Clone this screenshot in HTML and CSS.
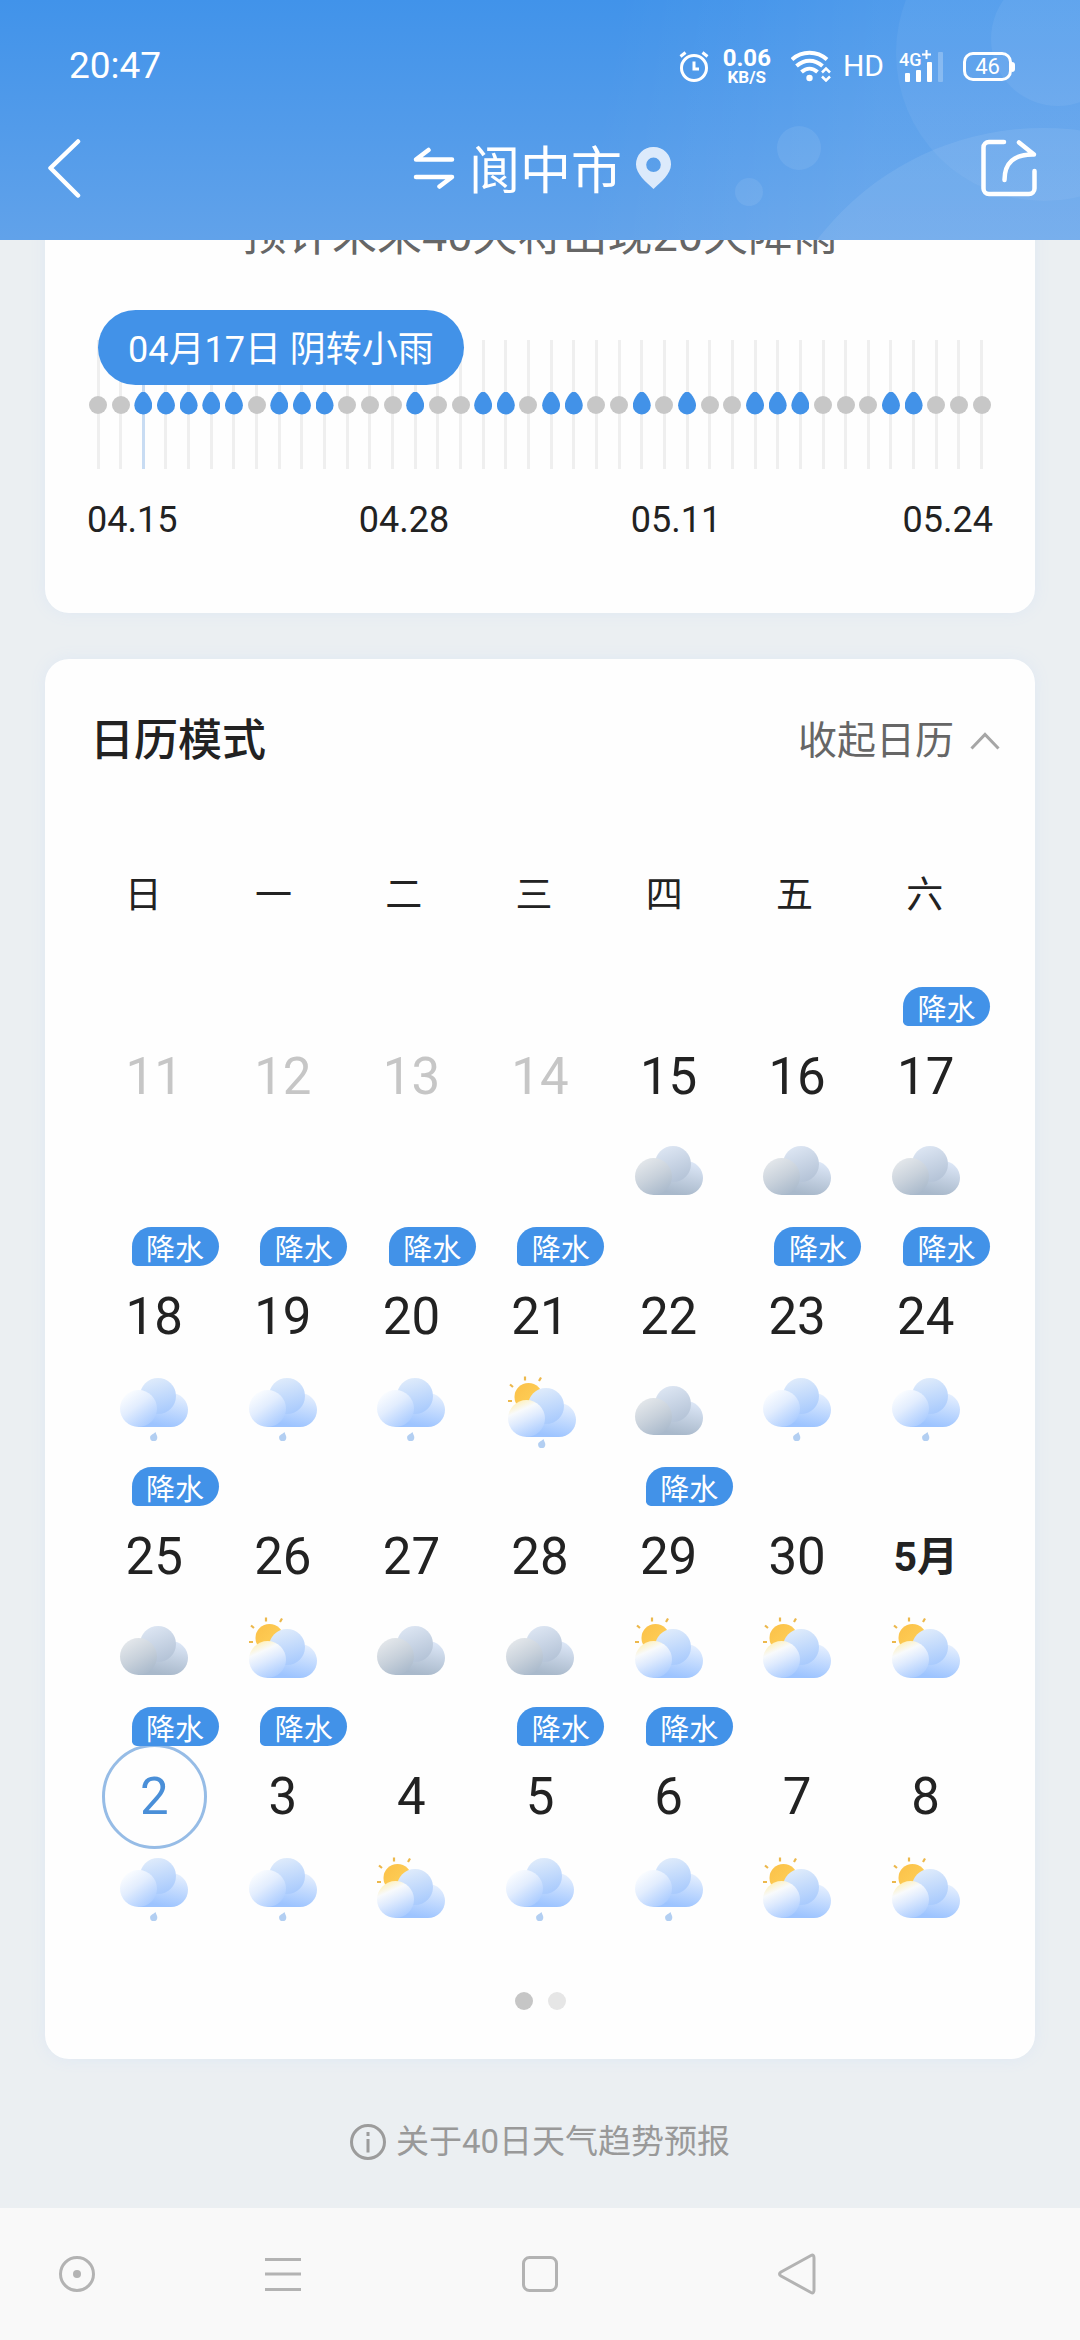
FILE: index.html
```html
<!DOCTYPE html>
<html lang="zh-CN">
<head>
<meta charset="utf-8">
<meta name="viewport" content="width=device-width, initial-scale=1">
<title>阆中市 40日天气</title>
<link rel="stylesheet" href="styles.css">
</head>
<body>
<svg class="sprite" width="0" height="0" aria-hidden="true">
  <defs>
    <linearGradient id="gray-left" x1="0.2" y1="0.1" x2="0.7" y2="1"><stop offset="0" stop-color="#e2e6ea"/><stop offset="0.5" stop-color="#c8d1db"/><stop offset="1" stop-color="#a9b9cb"/></linearGradient>
    <linearGradient id="gray-mid" x1="0.3" y1="0" x2="0.7" y2="1"><stop offset="0" stop-color="#dde6f3"/><stop offset="1" stop-color="#b3c2d6"/></linearGradient>
    <linearGradient id="gray-right" x1="0.9" y1="0" x2="0.6" y2="1"><stop offset="0" stop-color="#e0eafa"/><stop offset="1" stop-color="#a9b9cb"/></linearGradient>
    <linearGradient id="blue-left" x1="0.15" y1="0.1" x2="0.8" y2="1"><stop offset="0" stop-color="#fbfdff"/><stop offset="0.4" stop-color="#e2edfe"/><stop offset="1" stop-color="#a4c8ff"/></linearGradient>
    <linearGradient id="blue-mid" x1="0.3" y1="0" x2="0.6" y2="1"><stop offset="0" stop-color="#e0ecfb"/><stop offset="1" stop-color="#a8cafd"/></linearGradient>
    <linearGradient id="blue-right" x1="0.9" y1="0" x2="0.6" y2="1"><stop offset="0" stop-color="#eaf2fe"/><stop offset="1" stop-color="#9dc4ff"/></linearGradient>
    <linearGradient id="sunlit-left" x1="0.3" y1="0" x2="0.75" y2="1"><stop offset="0" stop-color="#fff0b8"/><stop offset="0.25" stop-color="#f8fafc"/><stop offset="0.5" stop-color="#dfebfe"/><stop offset="1" stop-color="#a4c8ff"/></linearGradient>
    <linearGradient id="sun-fill" x1="0" y1="0" x2="1" y2="1"><stop offset="0" stop-color="#fbc048"/><stop offset="1" stop-color="#ffd45c"/></linearGradient>
    <g id="cloud-gray">
      <path fill="url(#gray-right)" d="M51 15a17 17 0 0 1 0 34H18V36L36 22Z"/>
      <circle fill="url(#gray-mid)" cx="38" cy="18" r="18"/>
      <circle fill="url(#gray-left)" cx="18.500" cy="30.500" r="18.500"/>
    </g>
    <g id="cloud-blue">
      <path fill="url(#blue-right)" d="M51 15a17 17 0 0 1 0 34H18V36L36 22Z"/>
      <circle fill="url(#blue-mid)" cx="38" cy="18" r="18"/>
      <circle fill="url(#blue-left)" cx="18.500" cy="30.500" r="18.500"/>
    </g>
    <g id="cloud-sunlit">
      <circle fill="url(#sun-fill)" cx="20.500" cy="9" r="14"/>
      <path d="M17-11.500v4M33-10.500l-2 3.500M2-3.500l3 2.500M0 13h4" stroke="#ecb84c" stroke-width="2.200" fill="none"/>
      <path fill="url(#blue-right)" d="M51 15a17 17 0 0 1 0 34H18V36L36 22Z"/>
      <circle fill="url(#blue-mid)" cx="38" cy="18" r="18"/>
      <circle fill="url(#sunlit-left)" cx="18.500" cy="30.500" r="18.500"/>
    </g>
    <path id="raindrop" fill="#b3cff2" d="M5.500 0c1 3 1.800 3.800 1.800 5.400a3.600 3.600 0 0 1-7.200 0C.1 3 3.500 2.200 5.500 0Z"/>
    <symbol id="overcast" viewBox="0 0 72 76"><use href="#cloud-gray" x="2" y="12"/></symbol>
    <symbol id="rain" viewBox="0 0 72 76"><use href="#cloud-blue" x="2" y="4"/><use href="#raindrop" x="32" y="58"/></symbol>
    <symbol id="partly" viewBox="0 0 72 76"><use href="#cloud-sunlit" x="2" y="15"/></symbol>
    <symbol id="sun-rain" viewBox="0 0 72 76"><use href="#cloud-sunlit" x="4" y="14"/><use href="#raindrop" x="34" y="65"/></symbol>
  </defs>
</svg>

<header class="topbar">
  <svg class="bubbles" viewBox="780 0 300 240" preserveAspectRatio="xMaxYMin meet" aria-hidden="true">
    <g fill="#fff">
      <circle cx="1044" cy="53" r="148" fill-opacity="0.050"/>
      <circle cx="1058" cy="39" r="67" fill-opacity="0.060"/>
      <circle cx="1043" cy="412" r="284" fill-opacity="0.080"/>
      <circle cx="799" cy="148" r="22" fill-opacity="0.080"/>
      <circle cx="749" cy="192" r="14" fill-opacity="0.080"/>
    </g>
  </svg>
  <div class="status">
    <span class="clock">20:47</span>
    <div class="indicators">
      <svg class="alarm" width="30" height="32" viewBox="0 0 30 32" fill="none" stroke="#fff" stroke-width="3" aria-label="闹钟"><circle cx="15" cy="18" r="12.500"/><path d="M15 11.500V19h5M1.500 6.500l5-4M28.500 6.500l-5-4"/></svg>
      <span class="speed"><b class="rate">0.06</b><b class="unit">KB/S</b></span>
      <svg class="wifi" width="40" height="32" viewBox="0 0 40 32" fill="none" stroke="#fff" stroke-width="4" aria-label="无线网络"><path d="M1 9.500C11 .5 26 .5 36 9.500M5.500 16c8-7 18-7 26 0M10.500 22c5-4.500 11-4.500 16 0"/><circle cx="18.500" cy="28" r="3.200" fill="#fff" stroke="none"/><path d="M31 22.500l4-4 4 4M31 26.500l4 4 4-4" stroke-width="2.500"/></svg>
      <span class="hd">HD</span>
      <svg class="signal" width="45" height="34" viewBox="0 0 45 34" fill="#fff" aria-label="4G+ 信号"><text class="net" x="0" y="17">4G</text><path d="M23 4.500h9v2h-9zM26.500 1h2v9h-2z"/><rect x="6" y="24" width="5" height="9" rx="1"/><rect x="17" y="21" width="5" height="12" rx="1"/><rect x="28" y="13" width="5" height="20" rx="1"/><rect x="39" y="3" width="5" height="30" rx="1" fill-opacity="0.250"/></svg>
      <span class="battery">46</span>
    </div>
  </div>
  <div class="titlebar">
    <button class="icon-btn back" aria-label="返回"><svg width="34" height="60" viewBox="0 0 34 60" fill="none" stroke="#fff" stroke-width="4.500" stroke-linecap="round" stroke-linejoin="round"><path d="M31 3.500L3.500 30 31 57.500"/></svg></button>
    <button class="city">
      <svg width="42" height="42" viewBox="0 0 42 42" fill="none" stroke="#fff" stroke-width="4.500" stroke-linecap="round" stroke-linejoin="round"><path d="M39 12.500H3L15.500 3M3 30h36L26.500 39.500"/></svg>
      <h1>阆中市</h1>
      <svg width="35" height="42" viewBox="0 0 35 42"><path fill="#dceafb" fill-rule="evenodd" d="M17.500 0A17.300 17.300 0 0 1 35 17.500C35 27 25 35 17.500 42 10 35 0 27 0 17.500A17.300 17.300 0 0 1 17.500 0Zm0 10.500a7.300 7.300 0 1 0 0 14.600 7.300 7.300 0 0 0 0-14.600Z"/></svg>
    </button>
    <button class="icon-btn share" aria-label="分享"><svg width="56" height="58" viewBox="0 0 56 58" fill="none" stroke="#fff" stroke-width="4.500" stroke-linecap="round" stroke-linejoin="round"><path d="M23 3H8a5.500 5.500 0 0 0-5.500 5.500v41A5.500 5.500 0 0 0 8 55h40a5.500 5.500 0 0 0 5.500-5.500V32M23.500 41C23.500 24 33 15 53 15.500L38 3.500"/></svg></button>
  </div>
</header>

<main class="content">
  <section class="card trend">
    <h2 class="summary">预计未来40天将出现20天降雨</h2>
    <div class="chart">
      <i class="dry"></i><i class="dry"></i><i class="wet active"></i><i class="wet"></i><i class="wet"></i><i class="wet"></i><i class="wet"></i><i class="dry"></i><i class="wet"></i><i class="wet"></i>
      <i class="wet"></i><i class="dry"></i><i class="dry"></i><i class="dry"></i><i class="wet"></i><i class="dry"></i><i class="dry"></i><i class="wet"></i><i class="wet"></i><i class="dry"></i>
      <i class="wet"></i><i class="wet"></i><i class="dry"></i><i class="dry"></i><i class="wet"></i><i class="dry"></i><i class="wet"></i><i class="dry"></i><i class="dry"></i><i class="wet"></i>
      <i class="wet"></i><i class="wet"></i><i class="dry"></i><i class="dry"></i><i class="dry"></i><i class="wet"></i><i class="wet"></i><i class="dry"></i><i class="dry"></i><i class="dry"></i>
      <span class="tooltip">04月17日 阴转小雨</span>
    </div>
    <div class="axis"><span>04.15</span><span>04.28</span><span>05.11</span><span>05.24</span></div>
  </section>

  <section class="card calendar-card">
    <div class="card-head">
      <h2>日历模式</h2>
      <button class="collapse">收起日历<svg width="30" height="18" viewBox="0 0 30 18" fill="none" stroke="#a6a6a6" stroke-width="3"><path d="M1.500 16.500L15 2.500l13.500 14"/></svg></button>
    </div>
    <table class="calendar">
      <thead>
        <tr><th>日</th><th>一</th><th>二</th><th>三</th><th>四</th><th>五</th><th>六</th></tr>
      </thead>
      <tbody>
        <tr>
          <td><button class="day past">11</button></td>
          <td><button class="day past">12</button></td>
          <td><button class="day past">13</button></td>
          <td><button class="day past">14</button></td>
          <td><button class="day">15</button><svg class="wx"><use href="#overcast"/></svg></td>
          <td><button class="day">16</button><svg class="wx"><use href="#overcast"/></svg></td>
          <td><span class="tag">降水</span><button class="day">17</button><svg class="wx"><use href="#overcast"/></svg></td>
        </tr>
        <tr>
          <td><span class="tag">降水</span><button class="day">18</button><svg class="wx"><use href="#rain"/></svg></td>
          <td><span class="tag">降水</span><button class="day">19</button><svg class="wx"><use href="#rain"/></svg></td>
          <td><span class="tag">降水</span><button class="day">20</button><svg class="wx"><use href="#rain"/></svg></td>
          <td><span class="tag">降水</span><button class="day">21</button><svg class="wx"><use href="#sun-rain"/></svg></td>
          <td><button class="day">22</button><svg class="wx"><use href="#overcast"/></svg></td>
          <td><span class="tag">降水</span><button class="day">23</button><svg class="wx"><use href="#rain"/></svg></td>
          <td><span class="tag">降水</span><button class="day">24</button><svg class="wx"><use href="#rain"/></svg></td>
        </tr>
        <tr>
          <td><span class="tag">降水</span><button class="day">25</button><svg class="wx"><use href="#overcast"/></svg></td>
          <td><button class="day">26</button><svg class="wx"><use href="#partly"/></svg></td>
          <td><button class="day">27</button><svg class="wx"><use href="#overcast"/></svg></td>
          <td><button class="day">28</button><svg class="wx"><use href="#overcast"/></svg></td>
          <td><span class="tag">降水</span><button class="day">29</button><svg class="wx"><use href="#partly"/></svg></td>
          <td><button class="day">30</button><svg class="wx"><use href="#partly"/></svg></td>
          <td><button class="day month">5月</button><svg class="wx"><use href="#partly"/></svg></td>
        </tr>
        <tr>
          <td><span class="tag">降水</span><button class="day selected">2</button><svg class="wx"><use href="#rain"/></svg></td>
          <td><span class="tag">降水</span><button class="day">3</button><svg class="wx"><use href="#rain"/></svg></td>
          <td><button class="day">4</button><svg class="wx"><use href="#partly"/></svg></td>
          <td><span class="tag">降水</span><button class="day">5</button><svg class="wx"><use href="#rain"/></svg></td>
          <td><span class="tag">降水</span><button class="day">6</button><svg class="wx"><use href="#rain"/></svg></td>
          <td><button class="day">7</button><svg class="wx"><use href="#partly"/></svg></td>
          <td><button class="day">8</button><svg class="wx"><use href="#partly"/></svg></td>
        </tr>
      </tbody>
    </table>
    <div class="pager"><span class="dot current"></span><span class="dot"></span></div>
  </section>

  <a class="about" href="#about">
    <svg width="36" height="36" viewBox="0 0 36 36" fill="none" stroke="#9c9c9c" stroke-width="3"><circle cx="18" cy="18" r="16.500"/><path d="M18 8v4M18 15v13.500"/></svg>
    关于40日天气趋势预报
  </a>
</main>

<nav class="sysnav">
  <button aria-label="助手"><svg width="40" height="42" viewBox="0 0 40 42"><circle cx="20" cy="21" r="16.500"/><circle class="solid" cx="20" cy="21" r="4"/></svg></button>
  <button aria-label="菜单"><svg width="40" height="42" viewBox="0 0 40 42"><path d="M2 6.500h36M2 21h36M2 36.500h36"/></svg></button>
  <button aria-label="主页"><svg width="40" height="42" viewBox="0 0 40 42"><rect x="3.500" y="4.500" width="33" height="33" rx="6"/></svg></button>
  <button aria-label="返回"><svg width="40" height="42" viewBox="0 0 40 42"><path stroke-linejoin="round" d="M34 2.500Q37 1 37 5v32q0 4-3 2.500L4 23q-3-2 0-4Z"/></svg></button>
</nav>
</body>
</html>
```

FILE: styles.css
```css
* {
  box-sizing: border-box;
}

body {
  margin: 0;
  min-height: 100vh;
  display: flex;
  flex-direction: column;
  background: #ebeff2;
  color: #222;
  font-family: Roboto, "Noto Sans CJK SC", sans-serif;
}

h1,
h2 {
  margin: 0;
  font-weight: 400;
}

button {
  padding: 0;
  border: 0;
  background: none;
  color: inherit;
  font: inherit;
}

svg {
  display: block;
}

.sprite {
  position: absolute;
}

/* Header */

.topbar {
  position: sticky;
  top: 0;
  z-index: 2;
  height: 240px;
  padding-top: 36px;
  overflow: hidden;
  color: #fff;
  background:
    linear-gradient(100deg, rgba(255, 255, 255, 0) 55%, rgba(255, 255, 255, 0.08) 80%),
    linear-gradient(#4193ea, #61a2ea);
}

.bubbles {
  position: absolute;
  top: 0;
  right: 0;
  width: 300px;
  height: 240px;
  overflow: visible;
}

.status {
  position: relative;
  height: 60px;
  padding: 0 68px 0 69px;
  display: flex;
  align-items: center;
  justify-content: space-between;
}

.clock {
  font-size: 37px;
  line-height: 60px;
}

.indicators {
  display: flex;
  align-items: center;
}

.speed {
  margin: 0 20px 0 14px;
  display: flex;
  flex-direction: column;
  align-items: center;
}

.rate {
  font-size: 24px;
  line-height: 22px;
}

.unit {
  font-size: 17px;
  line-height: 17px;
}

.hd {
  margin: 0 15px 0 12px;
  font-size: 30px;
  line-height: 60px;
}

.signal {
  overflow: visible;
}

.net {
  font: 500 18px Roboto, sans-serif;
}

.battery {
  position: relative;
  width: 49px;
  height: 29px;
  margin-left: 19px;
  border: 3px solid #fff;
  border-radius: 10px;
  font-size: 22px;
  line-height: 24px;
  text-align: center;
}

.battery::after {
  content: "";
  position: absolute;
  top: 7px;
  right: -6px;
  width: 3px;
  height: 10px;
  border-radius: 0 3px 3px 0;
  background: #fff;
}

.titlebar {
  position: relative;
  height: 144px;
  padding: 0 43px 0 47px;
  display: grid;
  grid-template-columns: 1fr auto 1fr;
  align-items: center;
}

.share {
  justify-self: end;
}

.back {
  justify-self: start;
}

.city {
  display: flex;
  align-items: center;
  gap: 14px;
}

.city h1 {
  padding-top: 8px;
  font-size: 51px;
  line-height: 72px;
}

/* Cards */

.content {
  flex: 1;
  margin-top: -40px;
  padding: 0 45px;
  display: flex;
  flex-direction: column;
}

.card {
  padding: 0 44px;
  border-radius: 24px;
  background: #fefefe;
  box-shadow: 0 0 16px #dfe8f3;
}

.trend {
  padding-bottom: 73px;
  border-radius: 0 0 24px 24px;
}

.summary {
  color: #666;
  font-size: 45px;
  line-height: 72px;
  text-align: center;
}

.chart {
  position: relative;
  height: 129px;
  margin-top: 68px;
  display: flex;
  justify-content: space-between;
  align-items: stretch;
}

.chart i {
  width: 18px;
  display: grid;
  place-items: center;
  background: linear-gradient(#efefef, #efefef) center / 3px 100% no-repeat;
}

.chart .active {
  background-image: linear-gradient(#c8dcf3, #c8dcf3);
}

.chart i::before {
  content: "";
  width: 18px;
  height: 18px;
  border-radius: 50%;
  background: #c7c7c7;
}

.chart .wet::before {
  height: 23px;
  margin-bottom: 3px;
  border-radius: 0;
  background: #4292e8;
  clip-path: path("M9 0C12 0 18 8 18 14A9 9 0 0 1 0 14C0 8 6 0 9 0Z");
}

.tooltip {
  position: absolute;
  top: -30px;
  left: 9px;
  height: 75px;
  padding: 3px 30px 0;
  border-radius: 38px;
  background: #4292e8;
  color: #fff;
  font-size: 36px;
  line-height: 74px;
  white-space: nowrap;
}

.axis {
  margin: 31px -2px 0;
  display: flex;
  justify-content: space-between;
  font-size: 36px;
  line-height: 40px;
}

.calendar-card {
  margin-top: 46px;
  padding: 51px 45px 49px;
}

.card-head {
  margin-right: -10px;
  display: flex;
  align-items: center;
  justify-content: space-between;
  line-height: 62px;
}

.card-head h2 {
  font-size: 44px;
  font-weight: 500;
}

.collapse {
  display: flex;
  align-items: center;
  gap: 16px;
  color: #666;
  font-size: 39px;
}

/* Calendar */

.calendar,
.calendar thead,
.calendar tbody {
  display: block;
}

.calendar tr {
  display: grid;
  grid-template-columns: repeat(7, 1fr);
}

.calendar thead {
  margin: 94px 0 61px -12px;
}

.calendar th {
  padding: 0;
  font-size: 37px;
  font-weight: 400;
  line-height: 60px;
}

.calendar td {
  position: relative;
  height: 240px;
  padding: 37px 0 0;
  display: flex;
  flex-direction: column;
  align-items: center;
  gap: 5px;
}

.day {
  width: 105px;
  height: 105px;
  border-radius: 50%;
  font-size: 51px;
  line-height: 106px;
}

.past {
  color: #c6c6c6;
}

.month {
  font-size: 41px;
  font-weight: 700;
}

.selected {
  border: 3px solid #96bce6;
  color: #4a8fd8;
  line-height: 100px;
}

.tag {
  position: absolute;
  top: 0;
  right: 0;
  width: 87px;
  height: 39px;
  border-radius: 20px 20px 20px 5px;
  background: #4292e8;
  color: #fff;
  font-size: 29px;
  line-height: 46px;
  text-align: center;
}

.wx {
  width: 72px;
  height: 76px;
}

.pager {
  margin-top: 45px;
  display: flex;
  justify-content: center;
  gap: 15px;
}

.dot {
  width: 18px;
  height: 18px;
  border-radius: 50%;
  background: #e6e6e6;
}

.current {
  background: #c6c6c6;
}

.about {
  margin: 53px auto 36px;
  display: flex;
  align-items: center;
  gap: 10px;
  color: #999;
  font-size: 33px;
  line-height: 60px;
  text-decoration: none;
}

/* System navigation */

.sysnav {
  height: 132px;
  display: grid;
  grid-template-columns: 3fr 5fr 5fr 5fr 3fr;
  place-items: center;
  background: #f9f9f9;
}

.sysnav svg {
  fill: none;
  stroke: #b3b3b3;
  stroke-width: 3;
}

.sysnav .solid {
  fill: #b3b3b3;
  stroke: none;
}
```
